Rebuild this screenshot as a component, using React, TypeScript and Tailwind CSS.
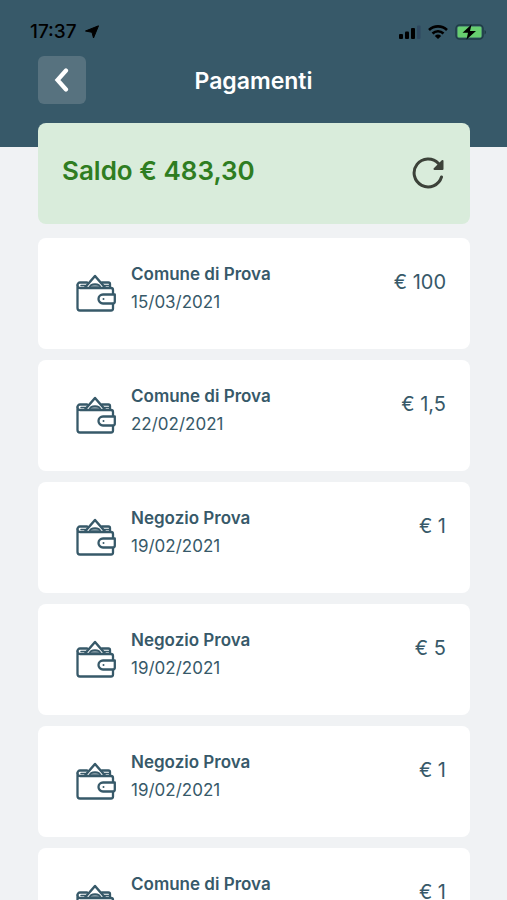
import React from "react";

interface Payment {
  name: string;
  date: string;
  amount: string;
}

const payments: Payment[] = [
  { name: "Comune di Prova", date: "15/03/2021", amount: "100" },
  { name: "Comune di Prova", date: "22/02/2021", amount: "1,5" },
  { name: "Negozio Prova", date: "19/02/2021", amount: "1" },
  { name: "Negozio Prova", date: "19/02/2021", amount: "5" },
  { name: "Negozio Prova", date: "19/02/2021", amount: "1" },
  { name: "Comune di Prova", date: "19/02/2021", amount: "1" },
];

const WalletIcon: React.FC = () => (
  <svg
    className="w-10 h-[38px] shrink-0"
    viewBox="0 0 40 38"
    fill="none"
    stroke="#375969"
    strokeWidth="2.300"
    strokeLinejoin="round"
    strokeLinecap="round"
    aria-hidden="true"
  >
    <path d="M37 20v-4a2 2 0 0 0-2-2H4a2.500 2.500 0 0 1-2.500-2.500V34a2.500 2.500 0 0 0 2.500 2.500h31a2 2 0 0 0 2-2V30" />
    <path d="M1.500 11a2.500 2.500 0 0 1 2.500-2.500h7M26 8.500h6.500a1.500 1.500 0 0 1 1.500 1.500v3.500" />
    <path d="M5 11.500h4.500M28.500 11.500h4" strokeWidth="1.500" />
    <path d="M9 13.500L19 2l10 11.500" strokeWidth="2.500" />
    <path d="M13.500 13.500c1-4.500 10-4.500 11 0z" fill="#375969" fillOpacity="0.6" strokeWidth="1.600" />
    <path d="M38.800 20.500H27a4.500 4.500 0 0 0 0 9h9.800a2 2 0 0 0 2-2z" />
    <circle cx="27.500" cy="25" r="1" fill="#375969" stroke="none" />
  </svg>
);

const StatusBar: React.FC = () => (
  <div className="flex items-center justify-between h-6 text-black">
    <div className="flex items-center gap-2">
      <span className="text-[19px] leading-6 font-medium">17:37</span>
      <svg className="w-[14px] h-[14px]" viewBox="1 0 14 14" aria-hidden="true">
        <path
          d="M14.500 0.800L9.500 13L8 7.300L1.500 6z"
          fill="currentColor"
          stroke="currentColor"
          strokeLinejoin="round"
        />
      </svg>
    </div>
    <div className="flex items-center gap-[7px]">
      <svg className="w-[22px] h-[14px]" viewBox="2 0 22 14" fill="currentColor" aria-hidden="true">
        <rect x="2" y="9" width="4" height="5" rx="1" />
        <rect x="8" y="6.500" width="4" height="7.500" rx="1" />
        <rect x="14" y="3" width="4" height="11" rx="1" />
        <rect x="20" y="0.500" width="3.500" height="13.500" rx="1" fill="#2f4961" />
      </svg>
      <svg className="w-5 h-[14px]" viewBox="0 0 20 14" fill="none" stroke="currentColor" aria-hidden="true">
        <path d="M1 5a13 13 0 0 1 18 0" strokeWidth="2.600" />
        <path d="M4.500 8.500a8 8 0 0 1 11 0" strokeWidth="2.600" />
        <path d="M10 14l-3.200-3a4.800 4.800 0 0 1 6.400 0z" fill="currentColor" stroke="none" />
      </svg>
      <svg className="w-8 h-4" viewBox="0 0 32 16" aria-hidden="true">
        <rect x="1" y="1" width="27" height="14" rx="3.500" fill="none" stroke="#1f3d46" strokeWidth="1.500" />
        <rect x="2.500" y="2.500" width="24" height="11" rx="1.500" fill="#67cf70" />
        <path d="M29.500 6v4.500c2-0.800 2-3.700 0-4.500z" fill="#1f3d46" />
        <path d="M16.500 0.500L7.500 8.800h5.500l-1.500 6.700L21 7h-6z" fill="currentColor" />
      </svg>
    </div>
  </div>
);

const PaymentCard: React.FC<Payment> = ({ name, date, amount }) => {
  return (
    <li className="flex items-start h-[111px] pl-[38px] pr-6 pt-[22px] bg-white rounded-lg text-[#375969]">
      <div className="pt-[14px]">
        <WalletIcon />
      </div>
      <div className="flex-1 ml-[15px]">
        <div className="text-[17px] leading-7 font-semibold">{name}</div>
        <div className="text-[17px] leading-7">{date}</div>
      </div>
      <div className="pt-2 text-[20px] leading-7">€ {amount}</div>
    </li>
  );
};

const App: React.FC = () => {
  return (
    <div className="h-screen overflow-y-auto [scrollbar-width:none] bg-[#f0f2f4] font-[Inter,sans-serif]">
      <header className="pt-5 pb-[43px] bg-[#375969]">
        <div className="pl-[30px] pr-5">
          <StatusBar />
        </div>
        <div className="grid grid-cols-[48px_1fr_48px] items-center mt-3 px-[38px]">
          <button
            type="button"
            aria-label="Indietro"
            className="flex items-center justify-center w-12 h-12 rounded-md bg-[#57727f]"
          >
            <svg className="w-4 h-6" viewBox="0 0 16 24" fill="none" aria-hidden="true">
              <path
                d="M12 2.500L3.500 12l8.500 9.500"
                stroke="white"
                strokeWidth="4.200"
                strokeLinecap="round"
              />
            </svg>
          </button>
          <h1 className="pt-[2px] text-[23px] leading-8 font-semibold text-center text-white">
            Pagamenti
          </h1>
        </div>
      </header>
      <main className="pl-[38px] pr-[37px] -mt-6 pb-6">
        <section className="flex items-start justify-between h-[101px] px-6 pt-[30px] mb-[14px] rounded-lg bg-[#d9ecdb]">
          <h2 className="text-[26px] leading-9 font-semibold text-[#2f7d21]">
            Saldo € 483,30
          </h2>
          <button type="button" aria-label="Aggiorna" className="mt-1">
            <svg className="w-9 h-8" viewBox="0 0 36 32" fill="none" aria-hidden="true">
              <path
                d="M31.500 20A14 14 0 1 1 28.500 6.500"
                stroke="#3c4239"
                strokeWidth="3"
                strokeLinecap="round"
              />
              <path
                d="M32.500 4v8h-8z"
                fill="#3c4239"
                stroke="#3c4239"
                strokeWidth="2"
                strokeLinejoin="round"
              />
            </svg>
          </button>
        </section>
        <ul className="flex flex-col gap-[11px]">
          {payments.map((payment, index) => (
            <PaymentCard key={index} {...payment} />
          ))}
        </ul>
      </main>
    </div>
  );
};

export default App;
